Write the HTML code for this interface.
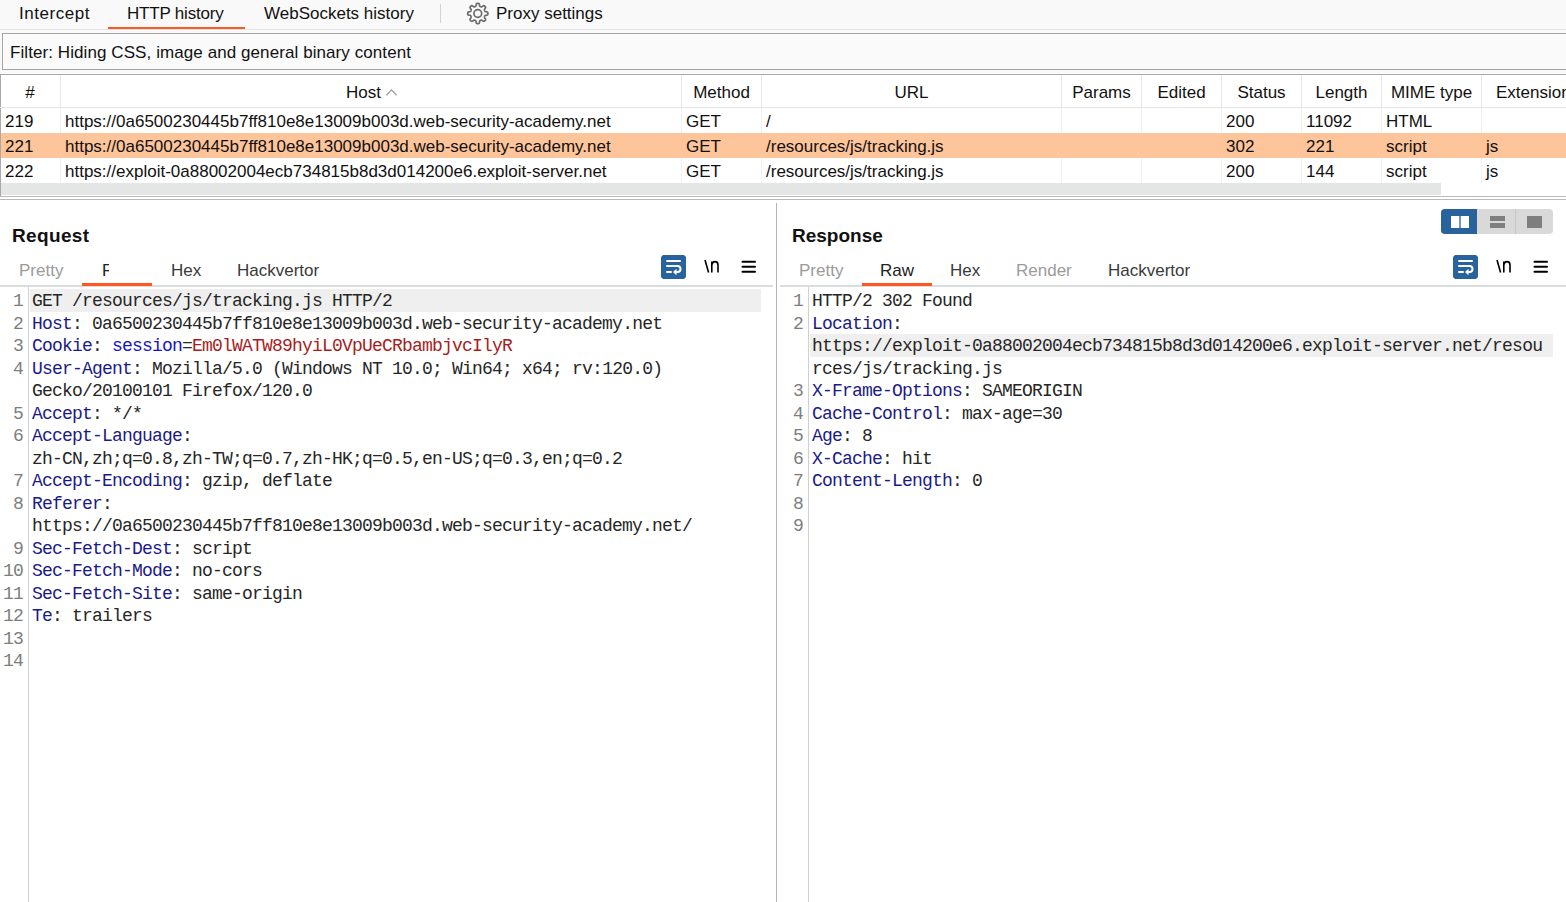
<!DOCTYPE html>
<html><head><meta charset="utf-8">
<style>
html,body{margin:0;padding:0;}
body{width:1566px;height:902px;overflow:hidden;position:relative;background:#ffffff;font-family:"Liberation Sans",sans-serif;font-size:17px;color:#111;}
.a{position:absolute;}
.t{position:absolute;white-space:pre;line-height:20px;}
#topbar{left:0;top:0;width:1566px;height:29px;background:#f9f9f9;}
#topline{left:0;top:29px;width:1566px;height:1px;background:#e2e4e4;}
#filterwrap{left:0;top:30px;width:1566px;height:44px;background:#fafafa;}
#filter{left:2px;top:33px;width:1570px;height:35px;border:1px solid #a3a3a3;background:#fafafa;box-shadow:inset 1px 1px 0 #ffffff;}
#table{left:0;top:74px;width:1566px;height:122px;background:#fff;}
.hl{background:#fec49a;}
.ed{position:absolute;white-space:pre;font-family:"Liberation Mono",monospace;font-size:18px;letter-spacing:-0.8px;line-height:22.5px;}
.mono{font-family:"Liberation Mono",monospace;font-size:16.67px;}
</style></head><body>
<div class="a" id="topbar"></div>
<div class="a" id="topline"></div>
<div class="a" id="filterwrap"></div>
<div class="a" id="filter"></div>
<div class="t" style="left:19px;top:4px;letter-spacing:0.55px;">Intercept</div>
<div class="t" style="left:127px;top:4px;letter-spacing:-0.2px;">HTTP history</div>
<div class="a" style="left:108px;top:27px;width:137px;height:2px;background:#fe5722;"></div>
<div class="t" style="left:264px;top:4px;">WebSockets history</div>
<div class="a" style="left:440px;top:4px;width:1px;height:19px;background:#d4d4d4;"></div>
<div class="t" style="left:496px;top:4px;">Proxy settings</div>
<div class="t" style="left:10px;top:43px;letter-spacing:0.08px;">Filter: Hiding CSS, image and general binary content</div>
<div class="a" id="table"></div>
<div class="a" style="left:0;top:74px;width:1566px;height:1px;background:#a9a9a9;"></div>
<div class="a" style="left:0;top:74px;width:1px;height:122px;background:#a9a9a9;"></div>
<div class="a" style="left:0;top:107px;width:1566px;height:1px;background:#e4e6e6;"></div>
<div class="a hl" style="left:1px;top:133px;width:1565px;height:25px;"></div>
<div class="a" style="left:60px;top:75px;width:1px;height:32px;background:#e8e8e8;"></div>
<div class="a" style="left:60px;top:108px;width:1px;height:25px;background:#f1f1f1;"></div>
<div class="a" style="left:60px;top:158px;width:1px;height:25px;background:#f1f1f1;"></div>
<div class="a" style="left:681px;top:75px;width:1px;height:32px;background:#e8e8e8;"></div>
<div class="a" style="left:681px;top:108px;width:1px;height:25px;background:#f1f1f1;"></div>
<div class="a" style="left:681px;top:158px;width:1px;height:25px;background:#f1f1f1;"></div>
<div class="a" style="left:761px;top:75px;width:1px;height:32px;background:#e8e8e8;"></div>
<div class="a" style="left:761px;top:108px;width:1px;height:25px;background:#f1f1f1;"></div>
<div class="a" style="left:761px;top:158px;width:1px;height:25px;background:#f1f1f1;"></div>
<div class="a" style="left:1061px;top:75px;width:1px;height:32px;background:#e8e8e8;"></div>
<div class="a" style="left:1061px;top:108px;width:1px;height:25px;background:#f1f1f1;"></div>
<div class="a" style="left:1061px;top:158px;width:1px;height:25px;background:#f1f1f1;"></div>
<div class="a" style="left:1141px;top:75px;width:1px;height:32px;background:#e8e8e8;"></div>
<div class="a" style="left:1141px;top:108px;width:1px;height:25px;background:#f1f1f1;"></div>
<div class="a" style="left:1141px;top:158px;width:1px;height:25px;background:#f1f1f1;"></div>
<div class="a" style="left:1221px;top:75px;width:1px;height:32px;background:#e8e8e8;"></div>
<div class="a" style="left:1221px;top:108px;width:1px;height:25px;background:#f1f1f1;"></div>
<div class="a" style="left:1221px;top:158px;width:1px;height:25px;background:#f1f1f1;"></div>
<div class="a" style="left:1301px;top:75px;width:1px;height:32px;background:#e8e8e8;"></div>
<div class="a" style="left:1301px;top:108px;width:1px;height:25px;background:#f1f1f1;"></div>
<div class="a" style="left:1301px;top:158px;width:1px;height:25px;background:#f1f1f1;"></div>
<div class="a" style="left:1381px;top:75px;width:1px;height:32px;background:#e8e8e8;"></div>
<div class="a" style="left:1381px;top:108px;width:1px;height:25px;background:#f1f1f1;"></div>
<div class="a" style="left:1381px;top:158px;width:1px;height:25px;background:#f1f1f1;"></div>
<div class="a" style="left:1481px;top:75px;width:1px;height:32px;background:#e8e8e8;"></div>
<div class="a" style="left:1481px;top:108px;width:1px;height:25px;background:#f1f1f1;"></div>
<div class="a" style="left:1481px;top:158px;width:1px;height:25px;background:#f1f1f1;"></div>
<div class="t" style="left:0px;top:83px;width:60px;text-align:center;">#</div>
<div class="t" style="left:346px;top:83px;">Host</div>
<div class="t" style="left:682px;top:83px;width:79px;text-align:center;">Method</div>
<div class="t" style="left:762px;top:83px;width:299px;text-align:center;">URL</div>
<div class="t" style="left:1062px;top:83px;width:79px;text-align:center;">Params</div>
<div class="t" style="left:1142px;top:83px;width:79px;text-align:center;">Edited</div>
<div class="t" style="left:1222px;top:83px;width:79px;text-align:center;">Status</div>
<div class="t" style="left:1302px;top:83px;width:79px;text-align:center;">Length</div>
<div class="t" style="left:1382px;top:83px;width:99px;text-align:center;">MIME type</div>
<div class="t" style="left:1496px;top:83px;">Extension</div>
<div class="t" style="left:5px;top:112px;">219</div>
<div class="t" style="left:65px;top:112px;">https://0a6500230445b7ff810e8e13009b003d.web-security-academy.net</div>
<div class="t" style="left:686px;top:112px;">GET</div>
<div class="t" style="left:766px;top:112px;">/</div>
<div class="t" style="left:1226px;top:112px;">200</div>
<div class="t" style="left:1306px;top:112px;">11092</div>
<div class="t" style="left:1386px;top:112px;">HTML</div>
<div class="t" style="left:5px;top:137px;">221</div>
<div class="t" style="left:65px;top:137px;">https://0a6500230445b7ff810e8e13009b003d.web-security-academy.net</div>
<div class="t" style="left:686px;top:137px;">GET</div>
<div class="t" style="left:766px;top:137px;">/resources/js/tracking.js</div>
<div class="t" style="left:1226px;top:137px;">302</div>
<div class="t" style="left:1306px;top:137px;">221</div>
<div class="t" style="left:1386px;top:137px;">script</div>
<div class="t" style="left:1486px;top:137px;">js</div>
<div class="t" style="left:5px;top:162px;">222</div>
<div class="t" style="left:65px;top:162px;">https://exploit-0a88002004ecb734815b8d3d014200e6.exploit-server.net</div>
<div class="t" style="left:686px;top:162px;">GET</div>
<div class="t" style="left:766px;top:162px;">/resources/js/tracking.js</div>
<div class="t" style="left:1226px;top:162px;">200</div>
<div class="t" style="left:1306px;top:162px;">144</div>
<div class="t" style="left:1386px;top:162px;">script</div>
<div class="t" style="left:1486px;top:162px;">js</div>
<div class="a" style="left:1px;top:183px;width:1440px;height:12px;background:#e4e5e5;"></div>
<div class="a" style="left:0;top:196px;width:1566px;height:1px;background:#b9b9b9;"></div>
<div class="a" style="left:0;top:199px;width:1566px;height:1px;background:#b9b9b9;"></div>
<div class="a" style="left:776px;top:203px;width:1px;height:699px;background:#b5b5b5;"></div>
<div class="t" style="left:12px;top:226px;font-weight:bold;font-size:19px;letter-spacing:0.35px;">Request</div>
<div class="t" style="left:792px;top:226px;font-weight:bold;font-size:19px;">Response</div>
<div class="t" style="left:19px;top:261px;color:#9b9b9b;">Pretty</div>
<div class="t" style="left:102px;top:261px;width:7px;overflow:hidden;color:#222;">R</div>
<div class="t" style="left:171px;top:261px;color:#3a3a3a;">Hex</div>
<div class="t" style="left:237px;top:261px;color:#3a3a3a;">Hackvertor</div>
<div class="a" style="left:0;top:285px;width:773px;height:2px;background:#dadddd;"></div>
<div class="a" style="left:82px;top:283px;width:70px;height:3px;background:#fe5722;"></div>
<div class="t" style="left:799px;top:261px;color:#9b9b9b;">Pretty</div>
<div class="t" style="left:880px;top:261px;color:#222;">Raw</div>
<div class="t" style="left:950px;top:261px;color:#3a3a3a;">Hex</div>
<div class="t" style="left:1016px;top:261px;color:#9b9b9b;">Render</div>
<div class="t" style="left:1108px;top:261px;color:#3a3a3a;">Hackvertor</div>
<div class="a" style="left:780px;top:285px;width:786px;height:2px;background:#dadddd;"></div>
<div class="a" style="left:862px;top:283px;width:70px;height:3px;background:#fe5722;"></div>
<div class="a" style="left:28px;top:287px;width:1px;height:615px;background:#d0d0d0;"></div>
<div class="a" style="left:808px;top:287px;width:1px;height:615px;background:#d0d0d0;"></div>
<div class="a" style="left:30px;top:289px;width:731px;height:23px;background:#efefef;"></div>
<div class="a" style="left:810px;top:334px;width:743px;height:23px;background:#efefef;"></div>
<div class="ed" style="left:0px;top:290.4px;width:23px;text-align:right;color:#7d7d7d;">1
2
3
4

5
6

7
8

9
10
11
12
13
14</div>
<div class="ed" style="left:32px;top:290.4px;color:#262626;">GET /resources/js/tracking.js HTTP/2
<span style="color:#1a1a88">Host</span>: <span>0a6500230445b7ff810e8e13009b003d.web-security-academy.net</span>
<span style="color:#1a1a88">Cookie</span>: <span style="color:#1414c4">session</span>=<span style="color:#a81c1c">Em0lWATW89hyiL0VpUeCRbambjvcIlyR</span>
<span style="color:#1a1a88">User-Agent</span>: <span>Mozilla/5.0 (Windows NT 10.0; Win64; x64; rv:120.0)</span>
Gecko/20100101 Firefox/120.0
<span style="color:#1a1a88">Accept</span>: <span>*/*</span>
<span style="color:#1a1a88">Accept-Language</span>:
zh-CN,zh;q=0.8,zh-TW;q=0.7,zh-HK;q=0.5,en-US;q=0.3,en;q=0.2
<span style="color:#1a1a88">Accept-Encoding</span>: <span>gzip, deflate</span>
<span style="color:#1a1a88">Referer</span>:
https://0a6500230445b7ff810e8e13009b003d.web-security-academy.net/
<span style="color:#1a1a88">Sec-Fetch-Dest</span>: <span>script</span>
<span style="color:#1a1a88">Sec-Fetch-Mode</span>: <span>no-cors</span>
<span style="color:#1a1a88">Sec-Fetch-Site</span>: <span>same-origin</span>
<span style="color:#1a1a88">Te</span>: <span>trailers</span>

</div>
<div class="ed" style="left:780px;top:290.4px;width:23px;text-align:right;color:#7d7d7d;">1
2


3
4
5
6
7
8
9</div>
<div class="ed" style="left:812px;top:290.4px;color:#262626;">HTTP/2 302 Found
<span style="color:#1a1a88">Location</span>:
https://exploit-0a88002004ecb734815b8d3d014200e6.exploit-server.net/resou
rces/js/tracking.js
<span style="color:#1a1a88">X-Frame-Options</span>: <span>SAMEORIGIN</span>
<span style="color:#1a1a88">Cache-Control</span>: <span>max-age=30</span>
<span style="color:#1a1a88">Age</span>: <span>8</span>
<span style="color:#1a1a88">X-Cache</span>: <span>hit</span>
<span style="color:#1a1a88">Content-Length</span>: <span>0</span>

</div>
<svg class="a" style="left:0;top:0;" width="1566" height="40"><path d="M477.80,3.40 L478.06,3.41 L478.33,3.43 L478.59,3.47 L478.84,3.56 L479.09,3.73 L479.30,4.05 L479.45,4.59 L479.55,5.25 L479.65,5.79 L479.78,6.12 L479.93,6.30 L480.10,6.42 L480.28,6.51 L480.45,6.59 L480.63,6.66 L480.81,6.74 L480.99,6.81 L481.18,6.87 L481.38,6.90 L481.62,6.88 L481.94,6.74 L482.40,6.42 L482.93,6.03 L483.42,5.76 L483.80,5.68 L484.09,5.73 L484.33,5.85 L484.55,6.01 L484.75,6.18 L484.94,6.36 L485.12,6.55 L485.29,6.75 L485.45,6.97 L485.57,7.21 L485.62,7.50 L485.54,7.88 L485.27,8.37 L484.88,8.90 L484.56,9.36 L484.42,9.68 L484.40,9.92 L484.43,10.12 L484.49,10.31 L484.56,10.49 L484.64,10.67 L484.71,10.85 L484.79,11.02 L484.88,11.20 L485.00,11.37 L485.18,11.52 L485.51,11.65 L486.05,11.75 L486.71,11.85 L487.25,12.00 L487.57,12.21 L487.74,12.46 L487.83,12.71 L487.87,12.97 L487.89,13.24 L487.90,13.50 L487.89,13.76 L487.87,14.03 L487.83,14.29 L487.74,14.54 L487.57,14.79 L487.25,15.00 L486.71,15.15 L486.05,15.25 L485.51,15.35 L485.18,15.48 L485.00,15.63 L484.88,15.80 L484.79,15.98 L484.71,16.15 L484.64,16.33 L484.56,16.51 L484.49,16.69 L484.43,16.88 L484.40,17.08 L484.42,17.32 L484.56,17.64 L484.88,18.10 L485.27,18.63 L485.54,19.12 L485.62,19.50 L485.57,19.79 L485.45,20.03 L485.29,20.25 L485.12,20.45 L484.94,20.64 L484.75,20.82 L484.55,20.99 L484.33,21.15 L484.09,21.27 L483.80,21.32 L483.42,21.24 L482.93,20.97 L482.40,20.58 L481.94,20.26 L481.62,20.12 L481.38,20.10 L481.18,20.13 L480.99,20.19 L480.81,20.26 L480.63,20.34 L480.45,20.41 L480.28,20.49 L480.10,20.58 L479.93,20.70 L479.78,20.88 L479.65,21.21 L479.55,21.75 L479.45,22.41 L479.30,22.95 L479.09,23.27 L478.84,23.44 L478.59,23.53 L478.33,23.57 L478.06,23.59 L477.80,23.60 L477.54,23.59 L477.27,23.57 L477.01,23.53 L476.76,23.44 L476.51,23.27 L476.30,22.95 L476.15,22.41 L476.05,21.75 L475.95,21.21 L475.82,20.88 L475.67,20.70 L475.50,20.58 L475.32,20.49 L475.15,20.41 L474.97,20.34 L474.79,20.26 L474.61,20.19 L474.42,20.13 L474.22,20.10 L473.98,20.12 L473.66,20.26 L473.20,20.58 L472.67,20.97 L472.18,21.24 L471.80,21.32 L471.51,21.27 L471.27,21.15 L471.05,20.99 L470.85,20.82 L470.66,20.64 L470.48,20.45 L470.31,20.25 L470.15,20.03 L470.03,19.79 L469.98,19.50 L470.06,19.12 L470.33,18.63 L470.72,18.10 L471.04,17.64 L471.18,17.32 L471.20,17.08 L471.17,16.88 L471.11,16.69 L471.04,16.51 L470.96,16.33 L470.89,16.15 L470.81,15.98 L470.72,15.80 L470.60,15.63 L470.42,15.48 L470.09,15.35 L469.55,15.25 L468.89,15.15 L468.35,15.00 L468.03,14.79 L467.86,14.54 L467.77,14.29 L467.73,14.03 L467.71,13.76 L467.70,13.50 L467.71,13.24 L467.73,12.97 L467.77,12.71 L467.86,12.46 L468.03,12.21 L468.35,12.00 L468.89,11.85 L469.55,11.75 L470.09,11.65 L470.42,11.52 L470.60,11.37 L470.72,11.20 L470.81,11.02 L470.89,10.85 L470.96,10.67 L471.04,10.49 L471.11,10.31 L471.17,10.12 L471.20,9.92 L471.18,9.68 L471.04,9.36 L470.72,8.90 L470.33,8.37 L470.06,7.88 L469.98,7.50 L470.03,7.21 L470.15,6.97 L470.31,6.75 L470.48,6.55 L470.66,6.36 L470.85,6.18 L471.05,6.01 L471.27,5.85 L471.51,5.73 L471.80,5.68 L472.18,5.76 L472.67,6.03 L473.20,6.42 L473.66,6.74 L473.98,6.88 L474.22,6.90 L474.42,6.87 L474.61,6.81 L474.79,6.74 L474.97,6.66 L475.15,6.59 L475.32,6.51 L475.50,6.42 L475.67,6.30 L475.82,6.12 L475.95,5.79 L476.05,5.25 L476.15,4.59 L476.30,4.05 L476.51,3.73 L476.76,3.56 L477.01,3.47 L477.27,3.43 L477.54,3.41Z" fill="none" stroke="#6b6b6b" stroke-width="1.7" stroke-linejoin="round"/><circle cx="477.8" cy="13.5" r="3.9" fill="none" stroke="#6b6b6b" stroke-width="1.7"/></svg>
<svg class="a" style="left:380px;top:84px;" width="24" height="16"><polyline points="6.5,11.2 11.5,5.9 16.5,11.2" fill="none" stroke="#9c9c9c" stroke-width="1.3"/></svg>
<div class="a" style="left:1441px;top:209px;width:112px;height:25px;border-radius:4px;background:#d9d9d9;overflow:hidden;">
<div class="a" style="left:0;top:0;width:36px;height:25px;background:#29639e;"></div>
<div class="a" style="left:74px;top:0;width:1px;height:25px;background:#c6c6c6;"></div>
<div class="a" style="left:10px;top:7px;width:8px;height:12px;background:#fff;"></div>
<div class="a" style="left:20px;top:7px;width:8px;height:12px;background:#fff;"></div>
<div class="a" style="left:18px;top:7px;width:2px;height:12px;background:#7196c2;"></div>
<div class="a" style="left:49px;top:7px;width:15px;height:5px;background:#7e7e7e;"></div>
<div class="a" style="left:49px;top:14px;width:15px;height:5px;background:#7e7e7e;"></div>
<div class="a" style="left:86px;top:7px;width:15px;height:12px;background:#7e7e7e;"></div>
</div>
<svg class="a" style="left:661px;top:254px;" width="100" height="26">
<path d="M2,0 H23 L25,2 V22 L23,24 H2 L0,22 V2 Z" fill="#29639e" transform="translate(0,1)"/>
<g stroke="#fff" stroke-width="2" fill="none" stroke-linecap="round">
<line x1="6" y1="7" x2="19" y2="7"/>
<path d="M6,12 H16.5 A3,3 0 0 1 16.5,18 H14"/>
<line x1="6" y1="18" x2="10" y2="18"/>
</g>
<path d="M12,18 L15.5,14.8 L15.5,21.2 Z" fill="#fff"/>
<g stroke="#000" stroke-width="1.6" fill="none">
<line x1="44" y1="6" x2="47.6" y2="18.5"/>
<path d="M50.8,7.6 V18.5 M50.8,10.8 C51.2,8.6 52.4,7.6 54,7.6 C55.9,7.6 57,8.8 57,11 V18.5"/>
</g>
<g stroke="#000" stroke-width="2" stroke-linecap="round">
<line x1="81.5" y1="7.8" x2="94" y2="7.8"/>
<line x1="81.5" y1="12.7" x2="94" y2="12.7"/>
<line x1="81.5" y1="17.8" x2="94" y2="17.8"/>
</g>
</svg>
<svg class="a" style="left:1453px;top:254px;" width="100" height="26">
<path d="M2,0 H23 L25,2 V22 L23,24 H2 L0,22 V2 Z" fill="#29639e" transform="translate(0,1)"/>
<g stroke="#fff" stroke-width="2" fill="none" stroke-linecap="round">
<line x1="6" y1="7" x2="19" y2="7"/>
<path d="M6,12 H16.5 A3,3 0 0 1 16.5,18 H14"/>
<line x1="6" y1="18" x2="10" y2="18"/>
</g>
<path d="M12,18 L15.5,14.8 L15.5,21.2 Z" fill="#fff"/>
<g stroke="#000" stroke-width="1.6" fill="none">
<line x1="44" y1="6" x2="47.6" y2="18.5"/>
<path d="M50.8,7.6 V18.5 M50.8,10.8 C51.2,8.6 52.4,7.6 54,7.6 C55.9,7.6 57,8.8 57,11 V18.5"/>
</g>
<g stroke="#000" stroke-width="2" stroke-linecap="round">
<line x1="81.5" y1="7.8" x2="94" y2="7.8"/>
<line x1="81.5" y1="12.7" x2="94" y2="12.7"/>
<line x1="81.5" y1="17.8" x2="94" y2="17.8"/>
</g>
</svg>
</body></html>
